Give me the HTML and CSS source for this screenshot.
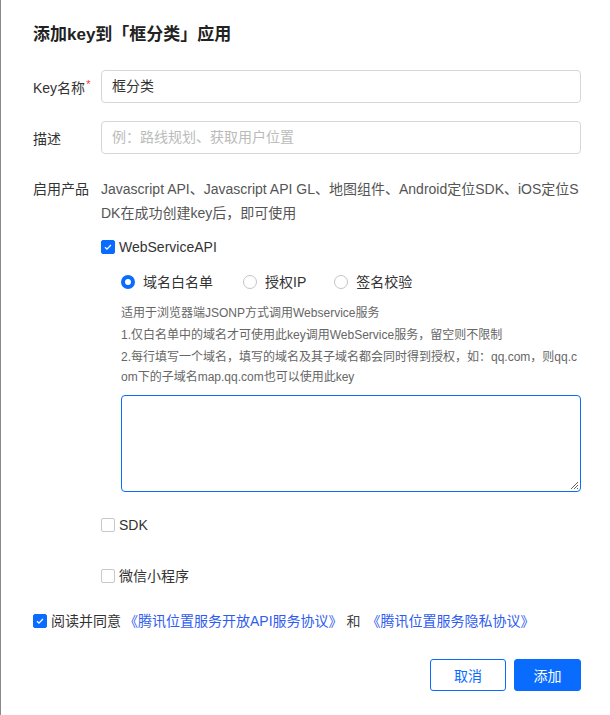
FILE: index.html
```html
<!DOCTYPE html>
<html lang="zh-CN">
<head>
<meta charset="utf-8">
<link rel="stylesheet" href="styles.css">
</head>
<body>
<div class="dialog">
  <h1 class="title">添加key到「框分类」应用</h1>
  <div class="row row-input">
    <div class="label">Key名称<span class="req">*</span></div>
    <div class="field"><div class="input">框分类</div></div>
  </div>
  <div class="row row-input row-desc">
    <div class="label">描述</div>
    <div class="field"><div class="input placeholder">例：路线规划、获取用户位置</div></div>
  </div>
  <div class="row row-prod">
    <div class="label">启用产品</div>
    <div class="field">
      <p class="prod-text">Javascript API、Javascript API GL、地图组件、Android定位SDK、iOS定位SDK在成功创建key后，即可使用</p>
      <label class="check check-ws"><span class="box on"><svg viewBox="0 0 14 14"><path d="M3.5 7.2l2.3 2.3 4.6-4.8" fill="none" stroke="#fff" stroke-width="1.5"/></svg></span>WebServiceAPI</label>
      <div class="sub">
        <div class="radios">
          <span class="radio"><span class="dot on"></span>域名白名单</span>
          <span class="radio radio-ip"><span class="dot"></span>授权IP</span>
          <span class="radio"><span class="dot"></span>签名校验</span>
        </div>
        <div class="help">
          <p>适用于浏览器端JSONP方式调用Webservice服务</p>
          <p>1.仅白名单中的域名才可使用此key调用WebService服务，留空则不限制</p>
          <p>2.每行填写一个域名，填写的域名及其子域名都会同时得到授权，如：qq.com，则qq.com下的子域名map.qq.com也可以使用此key</p>
        </div>
        <div class="textarea"><svg class="grip" viewBox="0 0 10 10"><path d="M9 2L2 9M9 5L5 9M9 8L8 9" stroke="#666" stroke-width="1"/></svg></div>
      </div>
      <label class="check check-sdk"><span class="box"></span>SDK</label>
      <label class="check check-wx"><span class="box"></span>微信小程序</label>
    </div>
  </div>
  <div class="agree">
    <span class="box on"><svg viewBox="0 0 14 14"><path d="M3.5 7.2l2.3 2.3 4.6-4.8" fill="none" stroke="#fff" stroke-width="1.5"/></svg></span>
    <span class="agree-text">阅读并同意</span>
    <a class="link link-1">《腾讯位置服务开放API服务协议》</a>
    <span class="and">和</span>
    <a class="link link-2">《腾讯位置服务隐私协议》</a>
  </div>
  <div class="footer">
    <button class="btn btn-cancel">取消</button>
    <button class="btn btn-primary">添加</button>
  </div>
</div>
</body>
</html>
```
FILE: styles.css
```css
html, body {
  margin: 0;
  padding: 0;
  background: #fff;
}
body {
  font-family: "Liberation Sans", "Noto Sans CJK SC", sans-serif;
  color: #333;
  border-left: 1px solid #8a8a8a;
  min-height: 715px;
  box-sizing: border-box;
}
.dialog {
  padding: 23px 29px 0 32px;
}
.title {
  margin: 0;
  font-size: 17px;
  font-weight: bold;
  color: #222;
  line-height: 24px;
}
.row {
  display: flex;
}
.row-input {
  margin-top: 23px;
  align-items: center;
}
.row-desc {
  margin-top: 18px;
}
.label {
  width: 68px;
  flex: none;
  font-size: 14px;
  color: #333;
}
.req {
  color: #f33;
  font-size: 11px;
  position: relative;
  top: -5px;
  margin-left: 1px;
}
.field {
  flex: 1;
  min-width: 0;
}
.input {
  height: 33px;
  box-sizing: border-box;
  border: 1px solid #d6d6d6;
  border-radius: 4px;
  padding: 0 10px;
  font-size: 14px;
  line-height: 31px;
  color: #333;
}
.input.placeholder {
  color: #bbb;
}
.row-prod {
  margin-top: 23px;
}
.row-prod .label {
  line-height: 24px;
}
.prod-text {
  margin: 0;
  font-size: 14px;
  line-height: 24px;
  color: #555;
  word-break: break-all;
}
.check {
  display: flex;
  align-items: center;
  font-size: 14px;
  color: #333;
  line-height: 20px;
}
.check-ws {
  margin-top: 12px;
}
.box {
  width: 14px;
  height: 14px;
  box-sizing: border-box;
  border: 1px solid #c8c8c8;
  border-radius: 2px;
  margin-right: 4px;
  flex: none;
  display: inline-flex;
  background: #fff;
}
.box.on {
  background: #0a6cff;
  border-color: #0a6cff;
}
.box svg {
  width: 100%;
  height: 100%;
}
.sub {
  padding-left: 20px;
}
.radios {
  display: flex;
  margin-top: 15px;
  font-size: 14px;
  line-height: 20px;
}
.radio {
  display: flex;
  align-items: center;
  margin-right: 30px;
}
.radio-ip {
  margin-right: 28px;
}
.dot {
  width: 14px;
  height: 14px;
  box-sizing: border-box;
  border: 1px solid #c4c4c4;
  border-radius: 50%;
  margin-right: 8px;
  flex: none;
}
.dot.on {
  border: 4px solid #0a6cff;
}
.help {
  margin-top: 10px;
  font-size: 12px;
  color: #666;
  line-height: 22px;
  word-break: break-all;
}
.help p {
  margin: 0;
}
.help p:last-child {
  line-height: 20px;
  margin-top: 1px;
}
.textarea {
  margin-top: 8px;
  height: 97px;
  box-sizing: border-box;
  border: 1px solid #0a6cff;
  border-radius: 4px;
  display: flex;
  justify-content: flex-end;
  align-items: flex-end;
}
.grip {
  width: 10px;
  height: 10px;
  margin: 0 1px 1px 0;
}
.check-sdk {
  margin-top: 23px;
}
.check-wx {
  margin-top: 31px;
}
.agree {
  margin-top: 25px;
  display: flex;
  align-items: center;
  font-size: 14px;
  line-height: 20px;
}
.agree .box {
  margin-right: 4px;
}
.link {
  color: #2f5cf0;
}
.link-1 {
  margin-left: 3px;
}
.and {
  margin-left: 4px;
  color: #444;
}
.link-2 {
  margin-left: 6px;
}
.footer {
  display: flex;
  justify-content: flex-end;
  gap: 8px;
  margin-top: 28px;
}
.btn {
  height: 32px;
  font-family: inherit;
  font-size: 14px;
  border-radius: 3px;
  box-sizing: border-box;
  cursor: pointer;
}
.btn-cancel {
  width: 76px;
  background: #fff;
  color: #0a6cff;
  border: 1px solid #0a6cff;
}
.btn-primary {
  width: 67px;
  background: #0a6cff;
  color: #fff;
  border: 1px solid #0a6cff;
}
```
